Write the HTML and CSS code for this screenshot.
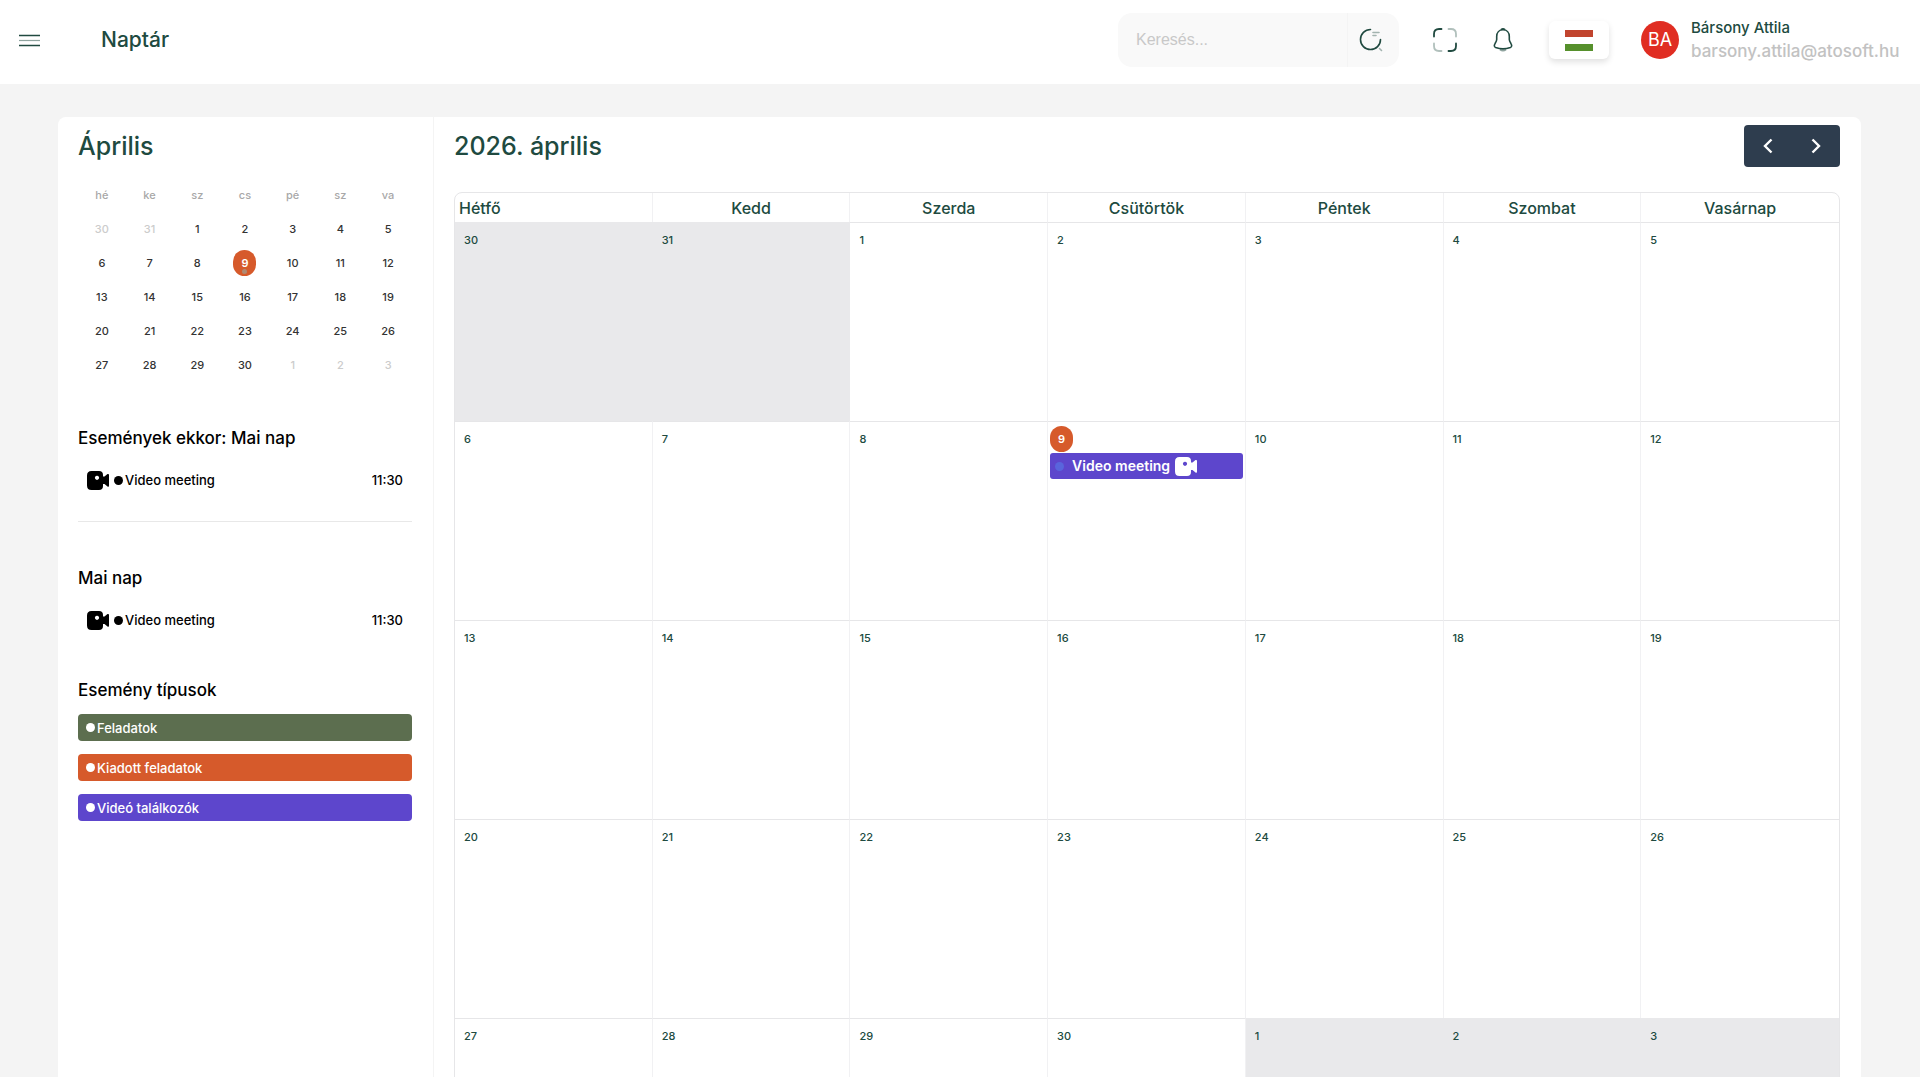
FILE: index.html
```
<!DOCTYPE html>
<html lang="hu">

<head>
    <meta charset="UTF-8">
    <meta name="viewport" content="width=device-width, initial-scale=1.0">
    <title>Naptár</title>
    <link rel="stylesheet" href="styles.css">
</head>

<body>
    <svg width="0" height="0" class="sprite" aria-hidden="true">
        <symbol id="icon-video" viewBox="0 0 22 19">
            <path fill-rule="evenodd" d="M4.500 0h7.500Q16 0 16 4v1.500h1.500L20.500 3Q22 2.500 22 4v10.500Q22 16.500 20.500 15.500L17.500 13H16v2q0 4-4 4H4.500Q0 19 0 14.500v-10Q0 0 4.500 0zM10 4.700a2.100 2.100 0 1 0 .01 0z" />
        </symbol>
    </svg>

    <header class="topbar">
        <button class="icon-btn menu-btn" type="button" aria-label="Menü">
            <svg width="21" height="13" viewBox="0 0 21 13" stroke="#204a40" fill="none">
                <path d="M0 1.500h21M0 11.500h21" stroke-width="1.600" />
                <path d="M0 6.500h21" stroke-width="1.200" opacity=".5" />
            </svg>
        </button>
        <h1 class="page-title">Naptár</h1>

        <form class="search">
            <input type="search" placeholder="Keresés..." aria-label="Keresés">
            <button class="icon-btn search-btn" type="submit" aria-label="Keresés indítása">
                <svg width="24" height="24" viewBox="0 0 24 24" fill="none" stroke="#204a40" stroke-width="1.600" stroke-linecap="round">
                    <path d="M11.500 1.500a10 10 0 1 0 10 10" />
                    <path d="M14 4.500h6M14 7.500h3M20.500 20.500l2 2" opacity=".4" />
                </svg>
            </button>
        </form>

        <button class="icon-btn full-btn" type="button" aria-label="Teljes képernyő">
            <svg width="24" height="24" viewBox="0 0 24 24" fill="none" stroke="#204a40" stroke-width="1.800" stroke-linecap="round">
                <path d="M1 8.500V6q0-5 5-5h2.500M15.500 23H18q5 0 5-5v-2.500" />
                <path d="M15.500 1H18q5 0 5 5v2.500M1 15.500V18q0 5 5 5h2.500" opacity=".35" />
            </svg>
        </button>
        <button class="icon-btn bell-btn" type="button" aria-label="Értesítések">
            <svg width="20" height="24" viewBox="0 0 20 24" fill="none" stroke="#204a40" stroke-width="1.600" stroke-linejoin="round">
                <path d="M10 1.800c-3.900 0-6.300 3-6.300 6.600v3.200c0 1.300-.6 2.300-1.500 3.700-.9 1.500-1.600 3.400.4 4.200 4.600 1.700 10.200 1.700 14.800 0 2-.8 1.300-2.700.4-4.200-.9-1.400-1.500-2.400-1.500-3.700V8.400c0-3.600-2.400-6.600-6.300-6.600z" />
                <path d="M8 1.600q2-1.400 4 0" />
                <path d="M7 21.500q3 2.200 6 0" opacity=".5" />
            </svg>
        </button>
        <button class="lang-btn" type="button" aria-label="Magyar">
            <span class="flag"></span>
        </button>

        <div class="user">
            <span class="avatar">BA</span>
            <div class="user-info">
                <div class="user-name">Bársony Attila</div>
                <div class="user-mail">barsony.attila@atosoft.hu</div>
            </div>
        </div>
    </header>

    <main class="content">
        <div class="card">
            <aside class="sidebar">
                <h2 class="month-title">Április</h2>
                <table class="mini">
                    <thead>
                        <tr><th>hé</th><th>ke</th><th>sz</th><th>cs</th><th>pé</th><th>sz</th><th>va</th></tr>
                    </thead>
                    <tbody>
                        <tr><td class="off">30</td><td class="off">31</td><td>1</td><td>2</td><td>3</td><td>4</td><td>5</td></tr>
                        <tr><td>6</td><td>7</td><td>8</td><td><span class="today has-event">9</span></td><td>10</td><td>11</td><td>12</td></tr>
                        <tr><td>13</td><td>14</td><td>15</td><td>16</td><td>17</td><td>18</td><td>19</td></tr>
                        <tr><td>20</td><td>21</td><td>22</td><td>23</td><td>24</td><td>25</td><td>26</td></tr>
                        <tr><td>27</td><td>28</td><td>29</td><td>30</td><td class="off">1</td><td class="off">2</td><td class="off">3</td></tr>
                    </tbody>
                </table>

                <section class="events">
                    <h3>Események ekkor: Mai nap</h3>
                    <div class="event-row">
                        <svg class="video" width="22" height="19"><use href="#icon-video" /></svg>
                        <span class="dot"></span>
                        <span>Video meeting</span>
                        <time>11:30</time>
                    </div>
                </section>
                <hr>
                <section class="events">
                    <h3>Mai nap</h3>
                    <div class="event-row">
                        <svg class="video" width="22" height="19"><use href="#icon-video" /></svg>
                        <span class="dot"></span>
                        <span>Video meeting</span>
                        <time>11:30</time>
                    </div>
                </section>

                <section class="types">
                    <h3>Esemény típusok</h3>
                    <div class="type green"><span class="dot"></span>Feladatok</div>
                    <div class="type orange"><span class="dot"></span>Kiadott feladatok</div>
                    <div class="type purple"><span class="dot"></span>Videó találkozók</div>
                </section>
            </aside>

            <section class="calendar">
                <div class="calendar-head">
                    <h2 class="month-title">2026. április</h2>
                    <div class="nav">
                        <button type="button" aria-label="Előző hónap">
                            <svg width="10" height="16" viewBox="0 0 10 16"><path d="M8.500 1.500L2 8l6.500 6.500" /></svg>
                        </button>
                        <button type="button" aria-label="Következő hónap">
                            <svg width="10" height="16" viewBox="0 0 10 16"><path d="M1.500 1.500L8 8l-6.500 6.500" /></svg>
                        </button>
                    </div>
                </div>

                <div class="grid-wrap">
                    <table class="grid">
                        <thead>
                            <tr><th>Hétfő</th><th>Kedd</th><th>Szerda</th><th>Csütörtök</th><th>Péntek</th><th>Szombat</th><th>Vasárnap</th></tr>
                        </thead>
                        <tbody>
                            <tr><td class="off">30</td><td class="off">31</td><td>1</td><td>2</td><td>3</td><td>4</td><td>5</td></tr>
                            <tr>
                                <td>6</td>
                                <td>7</td>
                                <td>8</td>
                                <td class="current">
                                    <span class="today">9</span>
                                    <a class="event" href="#">
                                        <span class="dot"></span>
                                        <span>Video meeting</span>
                                        <svg class="video" width="22" height="19"><use href="#icon-video" /></svg>
                                    </a>
                                </td>
                                <td>10</td>
                                <td>11</td>
                                <td>12</td>
                            </tr>
                            <tr><td>13</td><td>14</td><td>15</td><td>16</td><td>17</td><td>18</td><td>19</td></tr>
                            <tr><td>20</td><td>21</td><td>22</td><td>23</td><td>24</td><td>25</td><td>26</td></tr>
                            <tr><td>27</td><td>28</td><td>29</td><td>30</td><td class="off">1</td><td class="off">2</td><td class="off">3</td></tr>
                        </tbody>
                    </table>
                </div>
            </section>
        </div>
    </main>
</body>

</html>
```
FILE: styles.css
```
* {
    box-sizing: border-box;
}

body {
    margin: 0;
    height: 100vh;
    display: flex;
    flex-direction: column;
    background: #f4f4f4;
    color: #204a40;
    font-family: Inter, "Liberation Sans", sans-serif;
    font-weight: 500;
}

h1,
h2,
h3 {
    margin: 0;
    font-weight: 500;
}

button {
    border: none;
    padding: 0;
    background: none;
    cursor: pointer;
}

svg {
    display: block;
}

.sprite {
    position: absolute;
}

/* top bar */
.topbar {
    display: flex;
    align-items: center;
    flex: none;
    height: 84px;
    padding: 0 18px 4px 19px;
    background: #fff;
}

.icon-btn {
    display: flex;
    align-items: center;
    justify-content: center;
}

.page-title {
    margin-left: 61px;
    font-size: 21px;
    line-height: 24px;
}

.search {
    display: flex;
    width: 281px;
    height: 54px;
    margin-left: auto;
    border-radius: 14px;
    background: #f9f9f9;
    overflow: hidden;
}

.search input {
    flex: 1;
    min-width: 0;
    padding: 0 18px;
    border: none;
    outline: none;
    background: none;
    font: 16px "Liberation Sans", Arial, sans-serif;
}

.search input::placeholder {
    color: #c8c8c8;
}

.search-btn {
    width: 52px;
    padding-right: 6px;
    border-left: 1px solid #f4f4f4;
}

.full-btn {
    margin-left: 34px;
}

.bell-btn {
    margin-left: 36px;
}

.lang-btn {
    display: flex;
    align-items: center;
    justify-content: center;
    width: 60px;
    height: 38px;
    margin-left: 36px;
    border-radius: 6px;
    background: #fff;
    box-shadow: 0 3px 6px rgba(0, 0, 0, 0.12);
}

.flag {
    width: 28px;
    height: 21px;
    background: linear-gradient(#c1442e 0 7px, #fff 7px 14px, #56902c 14px);
}

.user {
    display: flex;
    align-items: center;
    gap: 12px;
    margin-left: 32px;
}

.user-info {
    min-width: 211px;
}

.avatar {
    width: 38px;
    height: 38px;
    border-radius: 50%;
    background: #e02d22;
    color: #fff;
    font-size: 18px;
    font-weight: 400;
    line-height: 38px;
    text-align: center;
}

.user-name {
    font-size: 15px;
    line-height: 22px;
}

.user-mail {
    color: #c2c2c2;
    font-size: 17px;
    line-height: 24px;
}

/* content */
.content {
    flex: 1;
    min-height: 0;
    padding: 33px 59px 0 58px;
    overflow-y: auto;
    scrollbar-width: none;
}

.card {
    display: flex;
    border-radius: 8px;
    background: #fff;
}

.month-title {
    font-size: 25px;
    line-height: 30px;
}

.sidebar {
    flex: none;
    width: 376px;
    padding: 14px 21px 14px 20px;
    border-right: 1px solid #f4f4f4;
    color: #000;
}

.sidebar .month-title {
    color: #204a40;
}

.sidebar h3 {
    font-size: 17px;
    line-height: 22px;
}

.mini {
    width: 100%;
    margin-top: 17px;
    border-collapse: collapse;
    table-layout: fixed;
    color: #333;
    font-size: 11px;
    text-align: center;
}

.mini th,
.mini td {
    height: 34px;
    padding: 0;
}

.mini th {
    color: #a8a8a8;
    font-weight: 500;
}

.mini .off {
    color: #ccc;
}

.today {
    display: block;
    width: 23px;
    height: 26px;
    border-radius: 12px;
    background: #d65a2b;
    color: #fff;
    font-size: 11px;
    font-weight: 600;
    line-height: 26px;
    text-align: center;
}

.mini .today {
    position: relative;
    margin: 0 auto;
}

.has-event::after {
    content: "";
    position: absolute;
    left: 9px;
    bottom: 2px;
    width: 5px;
    height: 5px;
    border-radius: 50%;
    background: #b08a72;
}

.events {
    padding-top: 45px;
}

.event-row {
    display: flex;
    align-items: center;
    height: 26px;
    margin-top: 18px;
    padding: 0 9px;
    font-size: 13px;
}

.event-row time {
    margin-left: auto;
}

.video {
    fill: currentColor;
}

.dot {
    flex: none;
    width: 9px;
    height: 9px;
    border-radius: 50%;
    background: currentColor;
}

.event-row .dot {
    margin: 0 2px 0 5px;
}

.sidebar hr {
    margin: 28px 0 0;
    border: none;
    border-top: 1px solid #e8e8e8;
}

.types {
    margin-top: 46px;
}

.type {
    display: flex;
    align-items: center;
    gap: 2px;
    height: 27px;
    margin-top: 13px;
    padding-left: 8px;
    border-radius: 4px;
    color: #fff;
    font-size: 13px;
}

.green {
    background: #5c6e4f;
}

.orange {
    background: #d65a2b;
}

.purple {
    background: #5d46cc;
}

/* month view */
.calendar {
    flex: 1;
    min-width: 0;
    padding: 8px 21px 21px 20px;
}

.calendar-head {
    display: flex;
    align-items: center;
    justify-content: space-between;
}

.nav {
    display: flex;
    border-radius: 4px;
    background: #2e3d4e;
}

.nav button {
    display: flex;
    align-items: center;
    justify-content: center;
    width: 48px;
    height: 42px;
}

.nav path {
    fill: none;
    stroke: #fff;
    stroke-width: 2.4;
}

.grid-wrap {
    margin-top: 25px;
    border: 1px solid #e6e6e8;
    border-radius: 8px 8px 0 0;
    overflow: hidden;
}

.grid {
    width: 100%;
    border-collapse: separate;
    border-spacing: 0;
    table-layout: fixed;
}

.grid th {
    height: 29px;
    padding: 0;
    border-right: 1px solid #f1f1f3;
    font-size: 16px;
    font-weight: 500;
    line-height: 28px;
}

.grid th:first-child {
    padding-left: 4px;
    text-align: left;
}

.grid td {
    height: 199px;
    padding: 9px;
    border-top: 1px solid #e6e6e8;
    border-right: 1px solid #f1f1f3;
    font-size: 11px;
    line-height: 16px;
    vertical-align: top;
}

.grid th:last-child,
.grid td:last-child {
    border-right: none;
}

.grid .off {
    border-color: #e9e9eb;
    background: #e9e9eb;
}

.grid .current {
    padding: 4px 2px;
}

.event {
    display: flex;
    align-items: center;
    height: 26px;
    margin-top: 1px;
    padding-left: 5px;
    border-radius: 3px;
    background: #5d46cc;
    color: #fff;
    font-size: 14px;
    font-weight: 600;
    text-decoration: none;
}

.event .dot {
    margin-right: 8px;
    background: #5965dc;
}

.event .video {
    margin-left: 5px;
}
```
